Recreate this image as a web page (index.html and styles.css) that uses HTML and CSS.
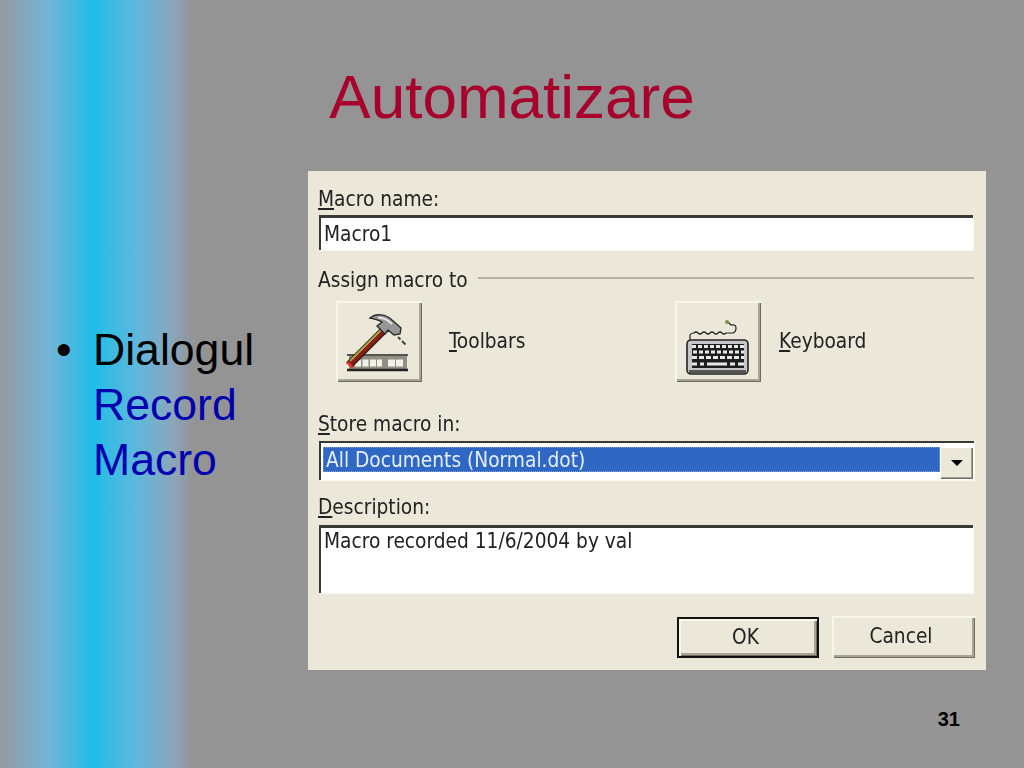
FILE: index.html
```html
<!DOCTYPE html>
<html lang="en">
<head>
    <meta charset="UTF-8">
    <meta name="viewport" content="width=device-width, initial-scale=1.0">
    <title>Automatizare</title>
    <link rel="stylesheet" href="styles.css">
</head>
<body>
    <h1 class="title">Automatizare</h1>

    <div class="content">
        <ul class="bullets">
            <li>Dialogul <span class="accent">Record Macro</span></li>
        </ul>

        <div class="dialog">
            <div class="label"><u>M</u>acro name:</div>
            <div class="field name-field">Macro1</div>

            <div class="group-title">
                <span>Assign macro to</span>
                <span class="group-line"></span>
            </div>

            <div class="assign-row">
                <div class="assign-item toolbars">
                    <div class="icon-btn">
                        <svg viewBox="0 0 86 81" width="86" height="81">
                            <path d="M11 54H72" stroke="#222" stroke-width="1.6"/>
                            <rect x="13" y="55" width="58" height="13" fill="#8f8f84"/>
                            <path d="M19 58.500h6v7h-6zM26.500 58.500h6v7h-6zM34 58.500h6v7h-6zM41 58.500h5v7h-5zM52 58.500h7v7h-7zM60 58.500h7v7h-7z" fill="#f2f2ea"/>
                            <path d="M11 69H72" stroke="#222" stroke-width="2.400"/>
                            <path d="M13 64L49 28" stroke="#1c1c14" stroke-width="8"/>
                            <path d="M13 64L49 28" stroke="#8e1a16" stroke-width="5.500"/>
                            <path d="M14 60L46 28" stroke="#a9a54a" stroke-width="2"/>
                            <path d="M11 61l6 6" stroke="#d33" stroke-width="2.500"/>
                            <path d="M34 17C40 12 50 13 56 19L65 27 64 33 58 34 52 29 49 33 41 25 46 21C43 19 38 18 34 17Z" fill="#979797" stroke="#2c2c2c" stroke-width="1.400"/>
                            <path d="M42 16.500C47 16.500 52 19 56 23" stroke="#e8e8e8" stroke-width="2" fill="none"/>
                            <path d="M62 36l2.500 2.500M66 40l3.500 3.500" stroke="#444" stroke-width="2"/>
                        </svg>
                    </div>
                    <span class="assign-label"><u>T</u>oolbars</span>
                </div>
                <div class="assign-item keyboard">
                    <div class="icon-btn">
                        <svg viewBox="0 0 86 81" width="86" height="81">
                            <path d="M15 39V35Q15 32 19 32Q21 30 23 32T27 32T31 32T35 32T39 32T43 32T47 32T51 32H58Q61 31 61 27T56 24L53 21" fill="none" stroke="#222" stroke-width="1.200"/>
                            <circle cx="52" cy="21" r="2" fill="#8a8f3c"/>
                            <rect x="12" y="39" width="61" height="34" rx="4" fill="#c6c6c6" stroke="#222" stroke-width="1.600"/>
                            <rect x="17" y="43" width="52" height="24" fill="#1e1e1e"/>
                            <path d="M17 45.500H69" stroke="#e8e8e8" stroke-width="3" stroke-dasharray="4 2"/>
                            <path d="M18 51H69" stroke="#e8e8e8" stroke-width="3" stroke-dasharray="4 2"/>
                            <path d="M17 56.500H69" stroke="#e8e8e8" stroke-width="3" stroke-dasharray="5 2"/>
                            <path d="M17 63H22M25 63H29M32 63H52M55 63H60M63 63H69" stroke="#e8e8e8" stroke-width="3"/>
                            <path d="M14 70.500H71" stroke="#555" stroke-width="3"/>
                        </svg>
                    </div>
                    <span class="assign-label"><u>K</u>eyboard</span>
                </div>
            </div>

            <div class="label store-label"><u>S</u>tore macro in:</div>
            <div class="combo">
                <div class="combo-value">All Documents (Normal.dot)</div>
                <div class="combo-arrow"><span class="arrow-down"></span></div>
            </div>

            <div class="label desc-label"><u>D</u>escription:</div>
            <div class="field desc-field">Macro recorded 11/6/2004 by val</div>

            <div class="actions">
                <div class="btn btn-default">OK</div>
                <div class="btn">Cancel</div>
            </div>
        </div>
    </div>

    <div class="page-number">31</div>
</body>
</html>
```

FILE: styles.css
```css
body {
    margin: 0;
    width: 1024px;
    height: 768px;
    overflow: hidden;
    font-family: 'Liberation Sans', Arial, sans-serif;
    background: linear-gradient(90deg, #959b9f 0, #72b4d8 50px, #1fbde6 92px, #5cb8dd 135px, #8aa6bc 172px, #949494 193px);
}

.title {
    margin: 0;
    height: 109px;
    padding-top: 62px;
    text-align: center;
    color: #a8002c;
    font-size: 62px;
    font-weight: normal;
    line-height: 70px;
}

.content {
    display: flex;
}

.bullets {
    list-style: none;
    margin: 0;
    padding: 151px 0 0 56px;
    box-sizing: border-box;
    flex: 0 0 308px;
}

.bullets li {
    position: relative;
    padding-left: 37px;
    color: #000;
    font-size: 44.600px;
    line-height: 55px;
}

.bullets li::before {
    content: "•";
    position: absolute;
    left: 0;
}

.accent {
    color: #0000b0;
}

.dialog {
    width: 678px;
    height: 499px;
    box-sizing: border-box;
    padding: 16px 12px 12px 10px;
    background: #ebe8d9;
    color: #222;
    font-family: 'DejaVu Sans Condensed', 'DejaVu Sans', sans-serif;
    font-size: 20.700px;
    filter: blur(0.5px);
}

.label {
    height: 24px;
    line-height: 24px;
}

.field {
    margin: 4px 1px 0 1px;
    padding-left: 3px;
    background: #fff;
    border-top: 3px solid #3a3a34;
    border-left: 2px solid #3a3a34;
    box-shadow: 1px 1px 0 #f8f7f0;
    box-sizing: border-box;
}

.name-field {
    height: 35px;
    line-height: 32px;
}

.group-title {
    display: flex;
    align-items: center;
    gap: 10px;
    height: 24px;
    line-height: 24px;
    margin-top: 18px;
}

.group-line {
    flex: 1;
    height: 2px;
    margin-top: -4px;
    background: #b5b2a0;
}

.assign-row {
    display: flex;
    margin-top: 9px;
    margin-left: 18px;
}

.assign-item {
    display: flex;
    align-items: center;
}

.toolbars {
    width: 339px;
    gap: 27px;
}

.keyboard {
    gap: 18px;
}

.assign-label {
    margin-top: -2px;
}

.icon-btn {
    width: 86px;
    height: 81px;
    background: #ebe8d9;
    box-shadow: inset 2px 2px 0 #f8f6ec, inset -1px -1px 0 #6e6b5d, inset -3px -3px 0 #a8a594;
}

.store-label {
    margin-top: 30px;
}

.combo {
    display: flex;
    height: 39px;
    margin-top: 5px;
    margin-left: 1px;
    padding: 4px 1px 1px 2px;
    box-sizing: border-box;
    background: #fff;
    border-top: 2px solid #3a3a34;
    border-left: 2px solid #3a3a34;
    box-shadow: 1px 1px 0 #f8f7f0;
}

.combo-value {
    flex: 1;
    height: 25px;
    padding-left: 3px;
    line-height: 27px;
    color: #e6eefc;
    background: #2f68c4;
    outline: 1px dotted #8aa0c8;
    outline-offset: -1px;
}

.combo-arrow {
    display: flex;
    align-items: center;
    justify-content: center;
    width: 33px;
    height: 32px;
    background: #ebe8d9;
    box-shadow: inset 1px 1px 0 #fff, inset -1px -1px 0 #6e6b5d, inset -2px -2px 0 #a8a594;
}

.arrow-down {
    width: 0;
    height: 0;
    border-left: 6px solid transparent;
    border-right: 6px solid transparent;
    border-top: 6px solid #000;
}

.desc-label {
    margin-top: 15px;
}

.desc-field {
    height: 68px;
    margin-top: 6px;
    line-height: 26px;
}

.actions {
    display: flex;
    justify-content: flex-end;
    gap: 13px;
    margin: 23px -1px 0 0;
}

.btn {
    width: 143px;
    height: 42px;
    padding-right: 5px;
    line-height: 41px;
    text-align: center;
    box-sizing: border-box;
    box-shadow: inset 2px 2px 0 #f8f6ec, inset -1px -1px 0 #6e6b5d, inset -3px -3px 0 #a8a594;
}

.btn-default {
    width: 142px;
    height: 41px;
    margin-top: 1px;
    line-height: 37px;
    border: 2px solid #111;
}

.page-number {
    margin-top: 37px;
    padding-right: 64px;
    text-align: right;
    color: #000;
    font-size: 20px;
    font-weight: bold;
    line-height: 24px;
}
```
